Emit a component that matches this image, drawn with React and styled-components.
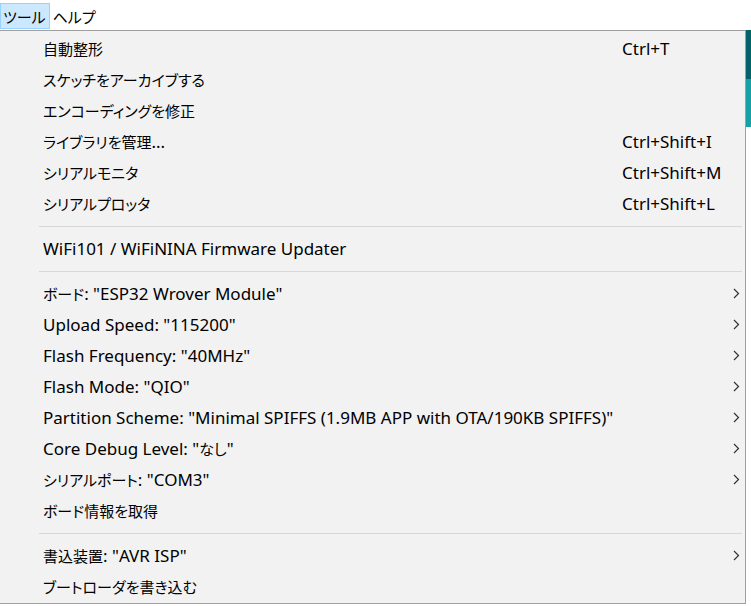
import React from 'react';
import styled, { createGlobalStyle } from 'styled-components';

const GlobalStyle = createGlobalStyle`
  body {
    margin: 0;
    background: #ffffff;
    font-family: "Noto Sans", "Noto Sans CJK JP", sans-serif;
    overflow: hidden;
  }
`;

const Window = styled.div`
  width: 751px;
  height: 606px;
  background: #ffffff;
  display: flex;
  flex-direction: column;
`;

const MenuBar = styled.div`
  height: 30px;
  display: flex;
  align-items: center;
  background: #ffffff;
`;

const BarItem = styled.div`
  height: 26px;
  margin-top: 2px;
  padding: 0 3px 0 2px;
  display: flex;
  align-items: center;
  font-size: 17px;
  color: #000;
  box-sizing: border-box;
  background: ${p => (p.$open ? '#cce8ff' : 'transparent')};
  border: 1px solid ${p => (p.$open ? '#99d1ff' : 'transparent')};
`;

const Body = styled.div`
  flex: 1;
  display: flex;
  align-items: flex-start;
`;

const Menu = styled.div`
  width: 746px;
  box-sizing: border-box;
  background: #f2f2f2;
  border: 1px solid #a0a0a0;
  border-left: none;
  padding: 2px 0 1px;
  display: flex;
  flex-direction: column;
`;

const Item = styled.div`
  height: 31px;
  display: grid;
  grid-template-columns: 43px 579px 1fr 24px;
  align-items: center;
  font-size: 17px;
  color: #000;
  white-space: nowrap;
`;

const Label = styled.span`
  grid-column: 2;
`;

const Shortcut = styled.span`
  grid-column: 3;
`;

const Jp = styled.span`
  font-family: "Noto Sans CJK JP", sans-serif;
  font-size: 15px;
  font-feature-settings: "palt";
`;

const Arrow = styled.span`
  grid-column: 4;
  display: flex;
  padding-left: 12px;
`;

const Separator = styled.div`
  height: 14px;
  display: flex;
  align-items: center;
  margin: 0 3px 0 39px;
  &::after {
    content: '';
    flex: 1;
    height: 1px;
    background: #d7d7d7;
  }
`;

const Strip = styled.div`
  width: 5px;
  display: flex;
  flex-direction: column;
`;

const StripPart = styled.div`
  height: ${p => p.$h}px;
  background: ${p => p.$c};
`;

const Chevron = () => (
  <svg width="7" height="11" viewBox="0 0 7 11">
    <path d="M1 1 L5.5 5.5 L1 10" fill="none" stroke="#333" strokeWidth="1.2" />
  </svg>
);

// japanese runs get their own size, like the UI font does
const Text = ({ children }) =>
  children
    .split(/([\u3000-\u30ff\u4e00-\u9fff]+)/)
    .filter(Boolean)
    .map((part, i) =>
      /[\u3000-\u30ff\u4e00-\u9fff]/.test(part) ? <Jp key={i}>{part}</Jp> : <React.Fragment key={i}>{part}</React.Fragment>
    );

const groups = [
  [
    { label: '自動整形', key: 'Ctrl+T' },
    { label: 'スケッチをアーカイブする' },
    { label: 'エンコーディングを修正' },
    { label: 'ライブラリを管理...', key: 'Ctrl+Shift+I' },
    { label: 'シリアルモニタ', key: 'Ctrl+Shift+M' },
    { label: 'シリアルプロッタ', key: 'Ctrl+Shift+L' },
  ],
  [{ label: 'WiFi101 / WiFiNINA Firmware Updater' }],
  [
    { label: 'ボード: "ESP32 Wrover Module"', sub: true },
    { label: 'Upload Speed: "115200"', sub: true },
    { label: 'Flash Frequency: "40MHz"', sub: true },
    { label: 'Flash Mode: "QIO"', sub: true },
    { label: 'Partition Scheme: "Minimal SPIFFS (1.9MB APP with OTA/190KB SPIFFS)"', sub: true },
    { label: 'Core Debug Level: "なし"', sub: true },
    { label: 'シリアルポート: "COM3"', sub: true },
    { label: 'ボード情報を取得' },
  ],
  [
    { label: '書込装置: "AVR ISP"', sub: true },
    { label: 'ブートローダを書き込む' },
  ],
];

export default function App() {
  return (
    <Window>
      <GlobalStyle />
      <MenuBar>
        <BarItem $open><Text>ツール</Text></BarItem>
        <BarItem><Text>ヘルプ</Text></BarItem>
      </MenuBar>
      <Body>
        <Menu>
          {groups.map((group, gi) => (
            <React.Fragment key={gi}>
              {gi > 0 && <Separator />}
              {group.map(item => (
                <Item key={item.label}>
                  <Label><Text>{item.label}</Text></Label>
                  {item.key && <Shortcut>{item.key}</Shortcut>}
                  {item.sub && (
                    <Arrow>
                      <Chevron />
                    </Arrow>
                  )}
                </Item>
              ))}
            </React.Fragment>
          ))}
        </Menu>
        <Strip>
          <StripPart $h={49} $c="#006468" />
          <StripPart $h={48} $c="#17a1a5" />
        </Strip>
      </Body>
    </Window>
  );
}
